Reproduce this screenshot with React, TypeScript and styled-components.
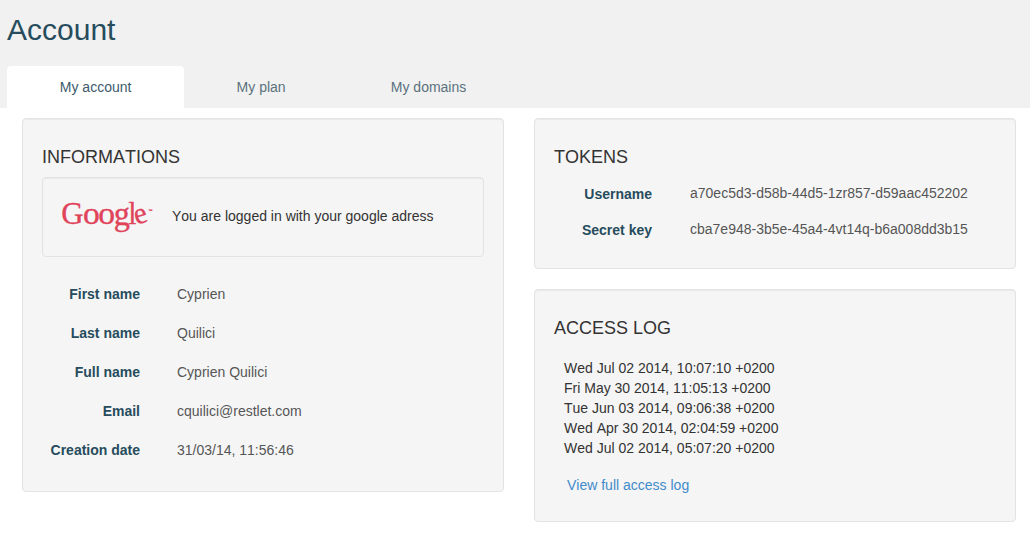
import React from "react";
import styled, { createGlobalStyle } from "styled-components";

const GlobalStyle = createGlobalStyle`
  *, *::before, *::after { box-sizing: border-box; }
  body {
    margin: 0;
    background: #fff;
    color: #333;
    font: 14px/20px "Liberation Sans", Arial, sans-serif;
    font-kerning: none;
  }
`;

const Header = styled.header`
  height: 108px;
  padding: 13px 7px 0;
  background: #f1f1f1;
`;

const Title = styled.h1`
  margin: 0 0 20px;
  font-size: 30px;
  line-height: 33px;
  font-weight: 400;
  color: #264c5d;
`;

const Tabs = styled.nav`
  display: flex;
`;

const Tab = styled.a<{ $active?: boolean }>`
  height: 42px;
  padding: 11px 52.4px 11px 52.8px;
  border-radius: 4px 4px 0 0;
  background: ${(p) => (p.$active ? "#fff" : "transparent")};
  color: ${(p) => (p.$active ? "#3c5a6b" : "#5b717d")};
  white-space: nowrap;
`;

const Content = styled.main`
  display: grid;
  grid-template-columns: 482px 482px;
  column-gap: 30px;
  align-items: start;
  padding: 10px 14px 0 22px;
`;

const Column = styled.div`
  display: flex;
  flex-direction: column;
  gap: 20px;
`;

const Well = styled.section<{ $height: number }>`
  height: ${(p) => p.$height}px;
  padding: 28px 19px 19px;
  border: 1px solid #e3e3e3;
  border-radius: 4px;
  background: #f5f5f5;
  box-shadow: inset 0 1px 1px rgba(0, 0, 0, 0.05);
`;

const Heading = styled.h2`
  margin: 0;
  font-size: 18px;
  line-height: 20px;
  font-weight: 400;
`;

const LoginNotice = styled.div`
  display: flex;
  align-items: center;
  height: 80px;
  margin: 10px 0 27px;
  padding: 0 19px 2px 14px;
  border: 1px solid #e3e3e3;
  border-radius: 4px;
  box-shadow: inset 0 1px 1px rgba(0, 0, 0, 0.05);
`;

const Logo = styled.svg`
  display: block;
  width: 101px;
  height: 52px;
  margin-right: 14px;
  overflow: visible;
  fill: #e0435a;
  stroke: #e0435a;
  stroke-width: 0.35px;
  font-family: "Liberation Serif", serif;
  font-size: 32px;
`;

const Trademark = styled.text`
  font-size: 4px;
  stroke-width: 0.2px;
`;

const Fields = styled.dl<{ $columnGap: number; $rowGap: number; $top?: number }>`
  display: grid;
  grid-template-columns: 98px 1fr;
  column-gap: ${(p) => p.$columnGap}px;
  row-gap: ${(p) => p.$rowGap}px;
  margin: ${(p) => p.$top ?? 0}px 0 0;
`;

const Label = styled.dt`
  font-weight: 700;
  text-align: right;
  color: #264c5d;
`;

const Value = styled.dd<{ $raised?: boolean }>`
  margin: ${(p) => (p.$raised ? "-1px 0 1px" : "0")};
  color: #555;
`;

const Log = styled.ul`
  margin: 20px 0 17px;
  padding: 0 0 0 10px;
  list-style: none;
`;

const LogLink = styled.a`
  margin-left: 13px;
  color: #428bca;
`;

const profile = [
  ["First name", "Cyprien"],
  ["Last name", "Quilici"],
  ["Full name", "Cyprien Quilici"],
  ["Email", "cquilici@restlet.com"],
  ["Creation date", "31/03/14, 11:56:46"],
];

const tokens = [
  ["Username", "a70ec5d3-d58b-44d5-1zr857-d59aac452202"],
  ["Secret key", "cba7e948-3b5e-45a4-4vt14q-b6a008dd3b15"],
];

const accesses = [
  "Wed Jul 02 2014, 10:07:10 +0200",
  "Fri May 30 2014, 11:05:13 +0200",
  "Tue Jun 03 2014, 09:06:38 +0200",
  "Wed Apr 30 2014, 02:04:59 +0200",
  "Wed Jul 02 2014, 05:07:20 +0200",
];

const GoogleLogo = () => (
  <Logo viewBox="-4 -8 101 52" role="img" aria-label="Google">
    <text transform="translate(0.3 26) scale(.96 1)">G</text>
    <text transform="translate(22 26) scale(1.05 .97)">o</text>
    <text transform="translate(37.2 26) scale(1.05 .97)">o</text>
    <text transform="translate(52.8 26.6) scale(1.01 1.06)">g</text>
    <text transform="translate(67.6 26) scale(.88 1)">l</text>
    <text transform="translate(75.4 26.8) rotate(-16) scale(.9 .95)">e</text>
    <Trademark x="87.4" y="13.6">™</Trademark>
  </Logo>
);

export default function App() {
  return (
    <>
      <GlobalStyle />
      <Header>
        <Title>Account</Title>
        <Tabs>
          <Tab $active>My account</Tab>
          <Tab>My plan</Tab>
          <Tab>My domains</Tab>
        </Tabs>
      </Header>
      <Content>
        <Well $height={374}>
          <Heading>INFORMATIONS</Heading>
          <LoginNotice>
            <GoogleLogo />
            You are logged in with your google adress
          </LoginNotice>
          <Fields $columnGap={37} $rowGap={19}>
            {profile.map(([label, value]) => (
              <React.Fragment key={label}>
                <Label>{label}</Label>
                <Value>{value}</Value>
              </React.Fragment>
            ))}
          </Fields>
        </Well>
        <Column>
          <Well $height={151}>
            <Heading>TOKENS</Heading>
            <Fields $columnGap={38} $rowGap={16} $top={17}>
              {tokens.map(([label, value]) => (
                <React.Fragment key={label}>
                  <Label>{label}</Label>
                  <Value $raised>{value}</Value>
                </React.Fragment>
              ))}
            </Fields>
          </Well>
          <Well $height={233}>
            <Heading>ACCESS LOG</Heading>
            <Log>
              {accesses.map((entry, index) => (
                <li key={index}>{entry}</li>
              ))}
            </Log>
            <LogLink>View full access log</LogLink>
          </Well>
        </Column>
      </Content>
    </>
  );
}
